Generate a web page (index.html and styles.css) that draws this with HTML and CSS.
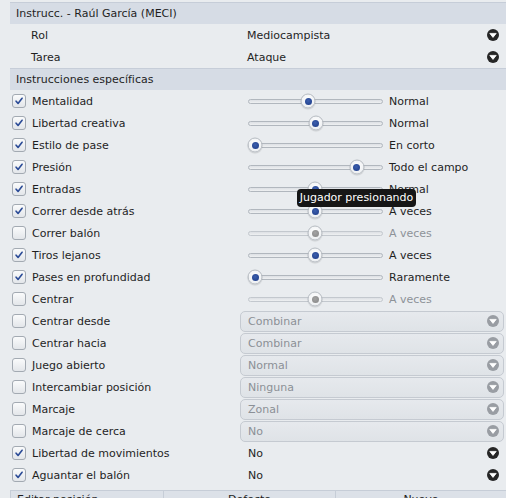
FILE: index.html
```html
<!DOCTYPE html>
<html lang="es">
<head>
<meta charset="utf-8">
<title>Instrucciones</title>
<link rel="stylesheet" href="styles.css">
</head>
<body>
<div class="panel">
  <div class="head">Instrucc. - Raúl García (MECI)</div>
  <div class="row">
    <div class="lbl plain">Rol</div>
    <div class="ctl"><div class="select"><span>Mediocampista</span><svg class="drop" viewBox="0 0 12 12"><circle cx="6" cy="6" r="6"/><path d="M2.8 4.4h6.4L6 8.4z" fill="#fff" stroke="#fff" stroke-width="0.8" stroke-linejoin="round"/></svg></div></div>
  </div>
  <div class="row">
    <div class="lbl plain">Tarea</div>
    <div class="ctl"><div class="select"><span>Ataque</span><svg class="drop" viewBox="0 0 12 12"><circle cx="6" cy="6" r="6"/><path d="M2.8 4.4h6.4L6 8.4z" fill="#fff" stroke="#fff" stroke-width="0.8" stroke-linejoin="round"/></svg></div></div>
  </div>

  <div class="head">Instrucciones específicas</div>

  <div class="row">
    <div class="lbl"><span class="cb on"><svg viewBox="0 0 14 14"><path d="M3.6 7.2 5.9 9.8 10.6 3.8"/></svg></span>Mentalidad</div>
    <div class="ctl"><div class="slider"><div class="track"><span class="thumb" style="left:59px"></span></div><span class="val">Normal</span></div></div>
  </div>
  <div class="row">
    <div class="lbl"><span class="cb on"><svg viewBox="0 0 14 14"><path d="M3.6 7.2 5.9 9.8 10.6 3.8"/></svg></span>Libertad creativa</div>
    <div class="ctl"><div class="slider"><div class="track"><span class="thumb" style="left:66.5px"></span></div><span class="val">Normal</span></div></div>
  </div>
  <div class="row">
    <div class="lbl"><span class="cb on"><svg viewBox="0 0 14 14"><path d="M3.6 7.2 5.9 9.8 10.6 3.8"/></svg></span>Estilo de pase</div>
    <div class="ctl"><div class="slider"><div class="track"><span class="thumb" style="left:6px"></span></div><span class="val">En corto</span></div></div>
  </div>
  <div class="row">
    <div class="lbl"><span class="cb on"><svg viewBox="0 0 14 14"><path d="M3.6 7.2 5.9 9.8 10.6 3.8"/></svg></span>Presión</div>
    <div class="ctl"><div class="slider"><div class="track"><span class="thumb" style="left:107.5px"></span></div><span class="val">Todo el campo</span></div></div>
  </div>
  <div class="row">
    <div class="lbl"><span class="cb on"><svg viewBox="0 0 14 14"><path d="M3.6 7.2 5.9 9.8 10.6 3.8"/></svg></span>Entradas</div>
    <div class="ctl"><div class="slider"><div class="track"><span class="thumb" style="left:66px"></span></div><span class="val">Normal</span></div></div>
  </div>
  <div class="row">
    <div class="lbl"><span class="cb on"><svg viewBox="0 0 14 14"><path d="M3.6 7.2 5.9 9.8 10.6 3.8"/></svg></span>Correr desde atrás</div>
    <div class="ctl"><div class="slider"><div class="track"><span class="thumb" style="left:66px"></span></div><span class="val">A veces</span></div></div>
  </div>
  <div class="row">
    <div class="lbl"><span class="cb"></span>Correr balón</div>
    <div class="ctl"><div class="slider dis"><div class="track"><span class="thumb" style="left:66px"></span></div><span class="val">A veces</span></div></div>
  </div>
  <div class="row">
    <div class="lbl"><span class="cb on"><svg viewBox="0 0 14 14"><path d="M3.6 7.2 5.9 9.8 10.6 3.8"/></svg></span>Tiros lejanos</div>
    <div class="ctl"><div class="slider"><div class="track"><span class="thumb" style="left:66px"></span></div><span class="val">A veces</span></div></div>
  </div>
  <div class="row">
    <div class="lbl"><span class="cb on"><svg viewBox="0 0 14 14"><path d="M3.6 7.2 5.9 9.8 10.6 3.8"/></svg></span>Pases en profundidad</div>
    <div class="ctl"><div class="slider"><div class="track"><span class="thumb" style="left:6px"></span></div><span class="val">Raramente</span></div></div>
  </div>
  <div class="row">
    <div class="lbl"><span class="cb"></span>Centrar</div>
    <div class="ctl"><div class="slider dis"><div class="track"><span class="thumb" style="left:66px"></span></div><span class="val">A veces</span></div></div>
  </div>
  <div class="row">
    <div class="lbl"><span class="cb"></span>Centrar desde</div>
    <div class="ctl"><div class="select dis"><span>Combinar</span><svg class="drop" viewBox="0 0 12 12"><circle cx="6" cy="6" r="6"/><path d="M2.8 4.4h6.4L6 8.4z" fill="#fff" stroke="#fff" stroke-width="0.8" stroke-linejoin="round"/></svg></div></div>
  </div>
  <div class="row">
    <div class="lbl"><span class="cb"></span>Centrar hacia</div>
    <div class="ctl"><div class="select dis"><span>Combinar</span><svg class="drop" viewBox="0 0 12 12"><circle cx="6" cy="6" r="6"/><path d="M2.8 4.4h6.4L6 8.4z" fill="#fff" stroke="#fff" stroke-width="0.8" stroke-linejoin="round"/></svg></div></div>
  </div>
  <div class="row">
    <div class="lbl"><span class="cb"></span>Juego abierto</div>
    <div class="ctl"><div class="select dis"><span>Normal</span><svg class="drop" viewBox="0 0 12 12"><circle cx="6" cy="6" r="6"/><path d="M2.8 4.4h6.4L6 8.4z" fill="#fff" stroke="#fff" stroke-width="0.8" stroke-linejoin="round"/></svg></div></div>
  </div>
  <div class="row">
    <div class="lbl"><span class="cb"></span>Intercambiar posición</div>
    <div class="ctl"><div class="select dis"><span>Ninguna</span><svg class="drop" viewBox="0 0 12 12"><circle cx="6" cy="6" r="6"/><path d="M2.8 4.4h6.4L6 8.4z" fill="#fff" stroke="#fff" stroke-width="0.8" stroke-linejoin="round"/></svg></div></div>
  </div>
  <div class="row">
    <div class="lbl"><span class="cb"></span>Marcaje</div>
    <div class="ctl"><div class="select dis"><span>Zonal</span><svg class="drop" viewBox="0 0 12 12"><circle cx="6" cy="6" r="6"/><path d="M2.8 4.4h6.4L6 8.4z" fill="#fff" stroke="#fff" stroke-width="0.8" stroke-linejoin="round"/></svg></div></div>
  </div>
  <div class="row">
    <div class="lbl"><span class="cb"></span>Marcaje de cerca</div>
    <div class="ctl"><div class="select dis"><span>No</span><svg class="drop" viewBox="0 0 12 12"><circle cx="6" cy="6" r="6"/><path d="M2.8 4.4h6.4L6 8.4z" fill="#fff" stroke="#fff" stroke-width="0.8" stroke-linejoin="round"/></svg></div></div>
  </div>
  <div class="row">
    <div class="lbl"><span class="cb on"><svg viewBox="0 0 14 14"><path d="M3.6 7.2 5.9 9.8 10.6 3.8"/></svg></span>Libertad de movimientos</div>
    <div class="ctl"><div class="select en"><span>No</span><svg class="drop" viewBox="0 0 12 12"><circle cx="6" cy="6" r="6"/><path d="M2.8 4.4h6.4L6 8.4z" fill="#fff" stroke="#fff" stroke-width="0.8" stroke-linejoin="round"/></svg></div></div>
  </div>
  <div class="row">
    <div class="lbl"><span class="cb on"><svg viewBox="0 0 14 14"><path d="M3.6 7.2 5.9 9.8 10.6 3.8"/></svg></span>Aguantar el balón</div>
    <div class="ctl"><div class="select en"><span>No</span><svg class="drop" viewBox="0 0 12 12"><circle cx="6" cy="6" r="6"/><path d="M2.8 4.4h6.4L6 8.4z" fill="#fff" stroke="#fff" stroke-width="0.8" stroke-linejoin="round"/></svg></div></div>
  </div>

  <div class="cols">
    <div class="col left">Editar posición</div>
    <div class="col">Defecto</div>
    <div class="col">Nuevo</div>
  </div>
</div>
<div class="tooltip">Jugador presionando</div>
</body>
</html>
```

FILE: styles.css
```css
html, body {
  margin: 0;
  padding: 0;
}
body {
  width: 506px;
  height: 498px;
  overflow: hidden;
  background: #e9ecef;
  font-family: "DejaVu Sans", sans-serif;
  font-size: 11px;
  color: #1f1f1f;
}
.panel {
  margin-left: 10px;
  padding-top: 2px;
}
.head {
  box-sizing: border-box;
  height: 22px;
  line-height: 21px;
  padding-left: 6px;
  background: #d6dce5;
  border-top: 1px solid #c6cdd8;
  color: #1f1f1f;
}
.row {
  display: grid;
  grid-template-columns: 230px 264px;
  height: 22px;
  align-items: center;
}
.lbl {
  display: flex;
  align-items: center;
  gap: 6px;
  padding-left: 2px;
  white-space: nowrap;
}
.lbl.plain {
  padding-left: 21px;
}
.cb {
  box-sizing: border-box;
  width: 14px;
  height: 14px;
  border: 1px solid #a3aab2;
  border-radius: 3px;
  background: linear-gradient(#fafbfc, #e3e6ea);
  display: flex;
}
.cb svg {
  width: 12px;
  height: 12px;
}
.cb svg path {
  fill: none;
  stroke: #2c4c97;
  stroke-width: 1.9;
  stroke-linecap: round;
  stroke-linejoin: round;
}
.ctl {
  display: flex;
  align-items: center;
  height: 22px;
}
.select {
  box-sizing: border-box;
  width: 100%;
  height: 21px;
  display: flex;
  align-items: center;
  justify-content: space-between;
  padding: 0 5px 0 7px;
}
.select.en {
  padding-left: 8px;
}
.select.dis {
  border: 1px solid #c5cad1;
  border-radius: 5px;
  background: linear-gradient(#e6e9ed, #dfe3e7);
  color: #8b9096;
  padding: 0 4px 0 7px;
}
.drop {
  width: 12px;
  height: 12px;
  fill: #262626;
  flex: none;
}
.select.dis .drop {
  fill: #999da3;
}
.slider {
  display: flex;
  align-items: center;
  padding-left: 8px;
}
.track {
  position: relative;
  box-sizing: border-box;
  width: 135px;
  height: 5px;
  border: 1px solid #b1b7be;
  border-radius: 3px;
  background: linear-gradient(#dde0e4, #eef0f2);
  margin-right: 6px;
}
.thumb {
  position: absolute;
  top: 50%;
  box-sizing: border-box;
  width: 15px;
  height: 15px;
  transform: translate(-50%, -50%);
  border-radius: 50%;
  border: 1px solid #b7bcc2;
  background: radial-gradient(circle at 50% 40%, #ffffff 0%, #f1f3f5 60%, #dfe2e6 100%);
  box-shadow: 0 1px 1px rgba(0,0,0,0.12);
}
.thumb::after {
  content: "";
  position: absolute;
  left: 50%;
  top: 50%;
  width: 7px;
  height: 7px;
  transform: translate(-50%, -50%);
  border-radius: 50%;
  background: radial-gradient(circle at 45% 40%, #3c5fae, #1c3a85);
}
.slider.dis .thumb::after {
  background: radial-gradient(circle at 45% 40%, #a3a3a3, #858585);
}
.slider.dis .track {
  border-color: #c3c8ce;
}
.slider.dis .val {
  color: #8d9298;
}
.val {
  white-space: nowrap;
}
.cols {
  display: grid;
  grid-template-columns: 153px 172px 171px;
  margin-top: 4px;
}
.col {
  box-sizing: border-box;
  height: 22px;
  line-height: 14px;
  padding-top: 2px;
  background: #dce1e8;
  border-top: 1px solid #c6cdd7;
  border-left: 1px solid #c6cdd7;
  text-align: center;
}
.col.left {
  text-align: left;
  padding-left: 6px;
}
.tooltip {
  position: absolute;
  left: 297px;
  top: 189px;
  width: 119px;
  height: 18px;
  line-height: 18px;
  text-align: center;
  background: #161616;
  color: #ffffff;
  border-radius: 4px;
  white-space: nowrap;
}
```
